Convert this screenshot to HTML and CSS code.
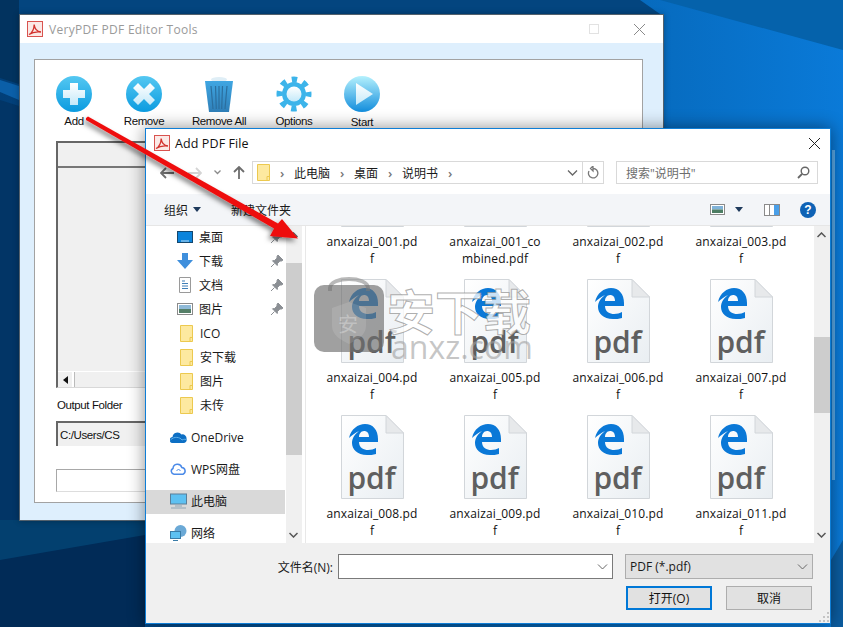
FILE: index.html
```html
<!DOCTYPE html>
<html>
<head>
<meta http-equiv="Content-Type" content="text/html; charset=UTF-8" />
<title>VeryPDF PDF Editor Tools</title>
<link rel="stylesheet" href="styles.css">
</head>

<body>

<svg class="defs" width="0" height="0">
	<defs>
		<linearGradient id="ball" x1="0" y1="0" x2="0" y2="1">
			<stop offset="0" stop-color="#55c8f2" />
			<stop offset="1" stop-color="#0a9be0" />
		</linearGradient>
		<linearGradient id="ball-start" x1="0" y1="0" x2="0" y2="1">
			<stop offset="0" stop-color="#b5f1fd" />
			<stop offset="1" stop-color="#128ddc" />
		</linearGradient>
		<linearGradient id="bin" x1="0" y1="0" x2="0" y2="1">
			<stop offset="0" stop-color="#3fa6e2" />
			<stop offset="1" stop-color="#2f7fb8" />
		</linearGradient>
		<linearGradient id="white-ish" x1="0" y1="0" x2="0" y2="1">
			<stop offset="0" stop-color="#ffffff" />
			<stop offset="1" stop-color="#c4e9f9" />
		</linearGradient>
		<linearGradient id="page" x1="0" y1="0" x2="1" y2="1">
			<stop offset="0" stop-color="#ffffff" />
			<stop offset="1" stop-color="#e9eef2" />
		</linearGradient>
		<symbol id="i-pdf" viewBox="0 0 16 16">
			<rect x="0.500" y="0.500" width="15" height="15" fill="#fbe9e6" stroke="#d9534f" />
			<path d="M2 13.500C5 12 7 8 7.200 3.500 7.600 8 10 10.500 14 11 10 10.500 5.500 11 2 13.500Z" fill="none" stroke="#d2322d" stroke-width="1.300" />
		</symbol>
		<symbol id="i-folder" viewBox="0 0 13 17">
			<path d="M0.500 0.500H12.500V16.500H0.500Z" fill="#fde9a0" stroke="#ecc94f" />
			<path d="M10 16V12.500H12.500" fill="none" stroke="#ecc94f" />
		</symbol>
		<symbol id="i-pin" viewBox="0 0 14 14">
			<path d="M8 1L13 6 11.500 7 9.800 7 7.500 9.500 7.200 11.500 2.500 6.800 4.500 6.500 7 4.200 7 2.500ZM4.500 9.500L1 13" fill="#8b8f94" stroke="#8b8f94" />
		</symbol>
		<symbol id="i-file" viewBox="0 0 63 84">
			<path d="M0.500 0.500H45L62.500 18V83.500H0.500Z" fill="url(#page)" stroke="#d2d6da" />
			<path d="M45 0.500V18H62.500Z" fill="#e7e9eb" stroke="#d2d6da" />
			<path transform="translate(8 9)" fill="#0a78d7" fill-rule="evenodd" d="M0 14C2 5 9 0 16 0 24 0 29 6 29 15V18H10C10 24 15 26 19 26 22 26 25 25 27 24V30C24 31 21 31 18 31 8 31 3 25 3 19 3 14 6 10 10 7 6 9 3 11 0 14ZM10 13H20C20 9 18 7 15 7 12 7 10 10 10 13Z" />
		</symbol>
	</defs>
</svg>

<div class="desktop">

	<svg class="wallpaper" viewBox="0 0 843 627">
		<defs>
			<linearGradient id="wall" x1="0" y1="0" x2="1" y2="0">
				<stop offset="0" stop-color="#023f78" />
				<stop offset="0.6" stop-color="#0460ac" />
				<stop offset="1" stop-color="#0a7ad8" />
			</linearGradient>
		</defs>
		<rect width="843" height="627" fill="url(#wall)" />
		<polygon points="0,0 660,0 843,50 843,0" fill="#0562ab" />
		<polygon points="0,0 640,0 660,14 0,14" fill="#03457f" />
		<polygon points="0,0 19,0 19,84 0,78" fill="#02335f" />
		<polygon points="0,80 19,86 19,100 0,92" fill="#0b5fa8" />
		<polygon points="0,100 19,106 19,520 0,560" fill="#023566" />
		<polygon points="0,520 145,520 145,627 0,627" fill="#03406f" />
		<polygon points="0,560 145,535 145,627 0,627" fill="#012b57" />
		<polygon points="831,560 843,540 843,627 831,627" fill="#0b5c9f" />
		<rect x="832" y="150" width="3" height="330" fill="#5aa9e6" />
	</svg>

	<section class="win app-win">
		<div class="app-title">
			<svg class="title-icon"><use href="#i-pdf" /></svg>
			<span class="app-title-text">VeryPDF PDF Editor Tools</span>
			<span class="app-max"></span>
			<svg class="app-close" viewBox="0 0 11 11"><path d="M0 0L11 11M11 0L0 11" stroke="#8a8a8a" fill="none" /></svg>
		</div>
		<div class="app-body">
			<div class="panel">
				<div class="tools">
					<div class="tool">
						<svg class="tool-icon" viewBox="0 0 36 36">
							<circle cx="18" cy="18" r="18" fill="url(#ball)" />
							<path d="M14 7H22V14H29V22H22V29H14V22H7V14H14Z" fill="url(#white-ish)" />
						</svg>
						<span>Add</span>
					</div>
					<div class="tool">
						<svg class="tool-icon" viewBox="0 0 36 36">
							<circle cx="18" cy="18" r="18" fill="url(#ball)" />
							<path d="M12 7L18 13 24 7 29 12 23 18 29 24 24 29 18 23 12 29 7 24 13 18 7 12Z" fill="url(#white-ish)" />
						</svg>
						<span>Remove</span>
					</div>
					<div class="tool">
						<svg class="tool-icon" viewBox="0 0 36 36">
							<ellipse cx="18" cy="3.500" rx="8" ry="2.500" fill="#dfeef6" />
							<path d="M4 5H32L28 36H8Z" fill="url(#bin)" />
							<path d="M10 10L12 33M14.500 10L15.300 33M18 10V33M21.500 10L20.700 33M26 10L24 33" stroke="#2b6f9f" stroke-width="1.200" />
						</svg>
						<span>Remove All</span>
					</div>
					<div class="tool">
						<svg class="tool-icon" viewBox="0 0 36 36">
							<circle cx="18" cy="18" r="14.500" fill="none" stroke="#3cb4ea" stroke-width="6" stroke-dasharray="5.400 5.990" stroke-dashoffset="2.700" />
							<circle cx="18" cy="18" r="12" fill="#3cb4ea" />
							<circle cx="18" cy="18" r="7.500" fill="url(#white-ish)" />
						</svg>
						<span>Options</span>
					</div>
					<div class="tool">
						<svg class="tool-icon" viewBox="0 0 36 36">
							<circle cx="18" cy="18" r="18" fill="url(#ball-start)" />
							<path d="M12 7L29 18 12 29Z" fill="url(#white-ish)" />
						</svg>
						<span class="tool-start">Start</span>
					</div>
				</div>
				<div class="grid-box">
					<div class="grid-head"></div>
					<div class="grid-rows"></div>
					<div class="grid-scroll">
						<span class="grid-scroll-btn"><i class="arrow-left"></i></span>
					</div>
				</div>
				<div class="folder-label">Output Folder</div>
				<div class="folder-box">C:/Users/CS</div>
				<div class="status-box"></div>
			</div>
		</div>
	</section>

	<section class="win dialog">
		<div class="dlg-title">
			<svg class="title-icon"><use href="#i-pdf" /></svg>
			<span class="dlg-title-text">Add PDF File</span>
			<svg class="dlg-close" viewBox="0 0 11 11"><path d="M0 0L11 11M11 0L0 11" stroke="#222" fill="none" /></svg>
		</div>

		<div class="dlg-address">
			<div class="nav-btns">
				<svg width="14" height="12" viewBox="0 0 14 12"><path d="M6 1L1 6 6 11M1 6H14" fill="none" stroke="#6d6d6d" stroke-width="1.800" /></svg>
				<svg class="nav-fwd" width="14" height="12" viewBox="0 0 14 12"><path d="M8 1L13 6 8 11M13 6H0" fill="none" stroke="#d4d4d4" stroke-width="1.800" /></svg>
				<svg class="nav-drop" width="7" height="5" viewBox="0 0 7 5"><path d="M0.500 0.500L3.500 3.500 6.500 0.500" fill="none" stroke="#8a8a8a" stroke-width="1.300" /></svg>
				<svg class="nav-up" width="12" height="13" viewBox="0 0 12 13"><path d="M1 6L6 1 11 6M6 1V13" fill="none" stroke="#6d6d6d" stroke-width="1.800" /></svg>
			</div>
			<div class="addr-box">
				<svg class="addr-folder"><use href="#i-folder" /></svg>
				<i class="crumb-sep">›</i><span>此电脑</span>
				<i class="crumb-sep">›</i><span>桌面</span>
				<i class="crumb-sep">›</i><span>说明书</span>
				<i class="crumb-sep">›</i>
				<svg class="addr-chev" width="11" height="6" viewBox="0 0 11 6"><path d="M1 0.500L5.500 5 10 0.500" fill="none" stroke="#666" stroke-width="1.300" /></svg>
				<span class="addr-refresh">
					<svg width="12" height="13" viewBox="0 0 12 13"><path d="M6 2.500A4.700 4.700 0 1 1 2 5M6 0V5L3.500 2.500Z" fill="none" stroke="#777" stroke-width="1.300" /></svg>
				</span>
			</div>
			<div class="search-box">
				<span>搜索"说明书"</span>
				<svg width="13" height="13" viewBox="0 0 13 13"><circle cx="8" cy="5" r="3.800" fill="none" stroke="#666" stroke-width="1.400" /><path d="M5 8L1 12" stroke="#666" stroke-width="1.800" /></svg>
			</div>
		</div>

		<div class="dlg-toolbar">
			<span class="tb-org">组织</span><i class="caret"></i>
			<span class="tb-new">新建文件夹</span>
			<svg class="tb-view" width="15" height="11" viewBox="0 0 15 11">
				<rect x="0.500" y="0.500" width="14" height="10" fill="#fff" stroke="#8a8a8a" />
				<rect x="2" y="2" width="11" height="3.500" fill="#7fb2d8" />
				<rect x="2" y="5.500" width="11" height="3.500" fill="#4c7d63" />
			</svg>
			<i class="caret caret-view"></i>
			<svg class="tb-pane" width="16" height="12" viewBox="0 0 16 12">
				<rect x="0.500" y="0.500" width="15" height="11" fill="#fff" stroke="#8a8a8a" />
				<rect x="10" y="1" width="5" height="10" fill="#4a9fe8" />
				<path d="M5.500 1V11" stroke="#8a8a8a" />
			</svg>
			<span class="tb-help">?</span>
		</div>

		<div class="dlg-main">
			<nav class="nav-pane">
				<div class="nav-list">
					<div class="nav-row">
						<svg class="nav-icon" viewBox="0 0 16 16"><rect x="0.500" y="2.500" width="15" height="11" fill="#0b84dc" stroke="#14476e" /><path d="M4 12H12" stroke="#bfe0f6" /></svg>
						<span>桌面</span><svg class="pin"><use href="#i-pin" /></svg>
					</div>
					<div class="nav-row">
						<svg class="nav-icon" viewBox="0 0 16 16"><path d="M5 0H11V7H16L8 16 0 7H5Z" fill="#3f8fdc" /></svg>
						<span>下载</span><svg class="pin"><use href="#i-pin" /></svg>
					</div>
					<div class="nav-row">
						<svg class="nav-icon" viewBox="0 0 16 16"><path d="M2.500 0.500H13.500V15.500H2.500Z" fill="#fff" stroke="#9a9a9a" /><path d="M5 4H8M5 6.500H11M5 9H11M5 11.500H11" stroke="#3f7fb8" /></svg>
						<span>文档</span><svg class="pin"><use href="#i-pin" /></svg>
					</div>
					<div class="nav-row">
						<svg class="nav-icon" viewBox="0 0 16 16"><rect x="0.500" y="2.500" width="15" height="11" fill="#fff" stroke="#8a8a8a" /><rect x="2" y="4" width="12" height="4" fill="#8fbad8" /><rect x="2" y="8" width="12" height="4" fill="#557f68" /></svg>
						<span>图片</span><svg class="pin"><use href="#i-pin" /></svg>
					</div>
					<div class="nav-row">
						<svg class="nav-folder"><use href="#i-folder" /></svg><span>ICO</span>
					</div>
					<div class="nav-row">
						<svg class="nav-folder"><use href="#i-folder" /></svg><span>安下载</span>
					</div>
					<div class="nav-row">
						<svg class="nav-folder"><use href="#i-folder" /></svg><span>图片</span>
					</div>
					<div class="nav-row">
						<svg class="nav-folder"><use href="#i-folder" /></svg><span>未传</span>
					</div>
					<div class="nav-row nav-root">
						<svg class="root-icon" viewBox="0 0 17 12"><path d="M3 12A3 3 0 0 1 2.500 6 5 5 0 0 1 11.500 3.500 4 4 0 0 1 16.500 8 3 3 0 0 1 14 12Z" fill="#0d6fc4" /><path d="M0.500 9C4 5 10 6 12 9 14 8 16 8 16.800 9" stroke="#5fb0ea" fill="none" /></svg>
						<span>OneDrive</span>
					</div>
					<div class="nav-row nav-root">
						<svg class="root-icon" viewBox="0 0 17 12"><path d="M4 11.200A3 3 0 0 1 3 5.500 4.500 4.500 0 0 1 11.800 4.500 3.500 3.500 0 0 1 13 11.200Z" fill="#fff" stroke="#4b8ae8" stroke-width="1.500" /><path d="M6.500 8L8.500 6 10.500 8" fill="none" stroke="#4b8ae8" /></svg>
						<span>WPS网盘</span>
					</div>
					<div class="nav-row nav-root nav-active">
						<svg class="root-icon" viewBox="0 0 17 15"><rect x="0.500" y="0.500" width="16" height="10" fill="#5ec1f2" stroke="#5a7f99" /><path d="M5 12.500H12M1 14.500H16" stroke="#8fa6b6" /></svg>
						<span>此电脑</span>
					</div>
					<div class="nav-row nav-root nav-last">
						<svg class="root-icon" viewBox="0 0 17 16"><circle cx="10.500" cy="6" r="6" fill="#6ba9d6" /><rect x="0.500" y="6.500" width="10" height="7" fill="#5ec1f2" stroke="#3a7ca8" /><path d="M3 15.500H8" stroke="#3a7ca8" /></svg>
						<span>网络</span>
					</div>
				</div>
			</nav>
			<div class="vscroll nav-scroll">
				<svg class="chev-up" width="9" height="6" viewBox="0 0 9 6"><path d="M0.500 5L4.500 1 8.500 5" fill="none" stroke="#555" stroke-width="1.500" /></svg>
				<div class="vthumb nav-thumb"></div>
				<svg class="chev-down" width="9" height="6" viewBox="0 0 9 6"><path d="M0.500 1L4.500 5 8.500 1" fill="none" stroke="#555" stroke-width="1.500" /></svg>
			</div>
			<div class="files">
				<div class="file-grid">
					<div class="file"><div class="thumb"><svg class="thumb-page"><use href="#i-file" /></svg></div><p>anxaizai_001.pd<br>f</p></div>
					<div class="file"><div class="thumb"><svg class="thumb-page"><use href="#i-file" /></svg></div><p>anxaizai_001_co<br>mbined.pdf</p></div>
					<div class="file"><div class="thumb"><svg class="thumb-page"><use href="#i-file" /></svg></div><p>anxaizai_002.pd<br>f</p></div>
					<div class="file"><div class="thumb"><svg class="thumb-page"><use href="#i-file" /></svg></div><p>anxaizai_003.pd<br>f</p></div>
					<div class="file"><div class="thumb"><svg class="thumb-page"><use href="#i-file" /></svg><span class="thumb-ext">pdf</span></div><p>anxaizai_004.pd<br>f</p></div>
					<div class="file"><div class="thumb"><svg class="thumb-page"><use href="#i-file" /></svg><span class="thumb-ext">pdf</span></div><p>anxaizai_005.pd<br>f</p></div>
					<div class="file"><div class="thumb"><svg class="thumb-page"><use href="#i-file" /></svg><span class="thumb-ext">pdf</span></div><p>anxaizai_006.pd<br>f</p></div>
					<div class="file"><div class="thumb"><svg class="thumb-page"><use href="#i-file" /></svg><span class="thumb-ext">pdf</span></div><p>anxaizai_007.pd<br>f</p></div>
					<div class="file"><div class="thumb"><svg class="thumb-page"><use href="#i-file" /></svg><span class="thumb-ext">pdf</span></div><p>anxaizai_008.pd<br>f</p></div>
					<div class="file"><div class="thumb"><svg class="thumb-page"><use href="#i-file" /></svg><span class="thumb-ext">pdf</span></div><p>anxaizai_009.pd<br>f</p></div>
					<div class="file"><div class="thumb"><svg class="thumb-page"><use href="#i-file" /></svg><span class="thumb-ext">pdf</span></div><p>anxaizai_010.pd<br>f</p></div>
					<div class="file"><div class="thumb"><svg class="thumb-page"><use href="#i-file" /></svg><span class="thumb-ext">pdf</span></div><p>anxaizai_011.pd<br>f</p></div>
				</div>
			</div>
			<div class="vscroll files-scroll">
				<svg class="chev-up" width="9" height="6" viewBox="0 0 9 6"><path d="M0.500 5L4.500 1 8.500 5" fill="none" stroke="#555" stroke-width="1.500" /></svg>
				<div class="vthumb files-thumb"></div>
				<svg class="chev-down" width="9" height="6" viewBox="0 0 9 6"><path d="M0.500 1L4.500 5 8.500 1" fill="none" stroke="#555" stroke-width="1.500" /></svg>
			</div>
		</div>

		<div class="dlg-foot">
			<label class="name-label">文件名(N):</label>
			<div class="name-input">
				<svg width="11" height="6" viewBox="0 0 11 6"><path d="M1 0.500L5.500 5 10 0.500" fill="none" stroke="#666" /></svg>
			</div>
			<div class="type-select">
				<span>PDF (*.pdf)</span>
				<svg width="11" height="6" viewBox="0 0 11 6"><path d="M1 0.500L5.500 5 10 0.500" fill="none" stroke="#666" /></svg>
			</div>
			<div class="foot-btns">
				<button class="btn btn-main">打开(O)</button>
				<button class="btn">取消</button>
			</div>
			<svg class="grip" width="10" height="10" viewBox="0 0 10 10"><path d="M8 0h2v2h-2zM4 4h2v2h-2zM8 4h2v2h-2zM0 8h2v2h-2zM4 8h2v2h-2zM8 8h2v2h-2z" fill="#c4c4c4" /></svg>
		</div>
	</section>

	<!-- site watermark over the dialog -->
	<div class="watermark">
		<svg class="mark-lock" viewBox="0 0 72 82">
			<path d="M17 20V17C17 5 55 5 55 17V20" fill="none" stroke="#8a8a8a" stroke-opacity="0.600" stroke-width="4" />
			<rect x="1" y="14" width="70" height="67" rx="10" fill="#6f6f6f" fill-opacity="0.660" />
			<path d="M36 31L53 37V55C53 65 42 70 36 73 30 70 19 65 19 55V37Z" fill="#fff" fill-opacity="0.120" />
		</svg>
		<span class="mark-shield">安</span>
		<span class="mark-cn">安下载</span>
		<span class="mark-en">anxz.com</span>
	</div>

	<svg class="red-arrow" viewBox="0 0 843 627">
		<defs>
			<filter id="arrow-shadow" x="-10%" y="-10%" width="120%" height="130%">
				<feDropShadow dx="-2" dy="3" stdDeviation="2.500" flood-color="#000" flood-opacity="0.500" />
			</filter>
		</defs>
		<path d="M86 118L88 116.500 278 223.500 282 219 298 238.500 270 236 274 228.500 86 120Z" fill="#ee1111" filter="url(#arrow-shadow)" />
	</svg>

</div>

</body>
</html>
```

FILE: styles.css
```css
* {
	box-sizing: border-box;
}

body {
	margin: 0;
	font-family: "Open Sans", "Noto Sans CJK SC", sans-serif;
	font-size: 12px;
	color: #1a1a1a;
	overflow: hidden;
}

p {
	margin: 0;
}

.defs {
	position: absolute;
}

.desktop {
	position: relative;
	width: 843px;
	height: 627px;
	overflow: hidden;
}

.wallpaper {
	position: absolute;
	left: 0;
	top: 0;
	width: 843px;
	height: 627px;
}

.win {
	position: absolute;
	display: flex;
	flex-direction: column;
}

/* back window */

.app-win {
	left: 19px;
	top: 14px;
	width: 645px;
	height: 507px;
	border: 1px solid #54616c;
	background: #deeffd;
	box-shadow: 0 0 6px rgba(0, 0, 0, 0.3);
}

.app-title {
	display: flex;
	align-items: center;
	height: 29px;
	padding-left: 7px;
	background: #fff;
}

.title-icon {
	width: 16px;
	height: 16px;
	flex: none;
}

.app-title-text {
	margin-left: 6px;
	color: #9a9a9a;
	font-size: 12px;
	letter-spacing: 0.3px;
}

.app-max {
	width: 10px;
	height: 10px;
	margin-left: auto;
	border: 1px solid #e2e2e2;
}

.app-close {
	width: 11px;
	height: 11px;
	margin: 0 18px 0 35px;
}

.app-body {
	flex: 1;
	padding: 16px 20px 17px 14px;
}

.panel {
	height: 444px;
	border: 1px solid #a2a2a2;
	background: #fff;
	font-family: "Liberation Sans", sans-serif;
	font-size: 11.5px;
	letter-spacing: -0.4px;
	color: #111;
}

.tools {
	display: grid;
	grid-template-columns: 70px 70px 80px 70px 66px;
	height: 81px;
	padding: 16px 0 0 4px;
}

.tool {
	display: flex;
	flex-direction: column;
	align-items: center;
	gap: 3px;
}

.tool-icon {
	width: 36px;
	height: 36px;
}

.tool-start {
	margin-top: 1px;
}

.grid-box {
	display: flex;
	flex-direction: column;
	width: 560px;
	height: 247px;
	margin-left: 21px;
	border-left: 2px solid #666;
	border-top: 2px solid #666;
	border-bottom: 1px solid #d8d8d8;
	background: #f0f0f0;
}

.grid-head {
	height: 25px;
	border-bottom: 2px solid #777;
}

.grid-rows {
	flex: 1;
}

.grid-scroll {
	display: flex;
	height: 16px;
	border-top: 1px solid #fff;
}

.grid-scroll-btn {
	display: flex;
	align-items: center;
	justify-content: center;
	width: 16px;
	border-right: 2px solid #fff;
	box-shadow: 1px 0 0 #bbb;
}

.arrow-left {
	border-top: 4px solid transparent;
	border-bottom: 4px solid transparent;
	border-right: 5px solid #111;
}

.folder-label {
	display: flex;
	align-items: center;
	height: 33px;
	padding-left: 1px;
	margin-left: 21px;
}

.folder-box {
	display: flex;
	align-items: center;
	width: 560px;
	height: 25px;
	margin-left: 21px;
	padding-left: 2px;
	border-left: 2px solid #666;
	border-top: 2px solid #666;
	background: #f0f0f0;
}

.status-box {
	width: 560px;
	height: 23px;
	margin: 23px 0 0 21px;
	border: 1px solid #a8a8a8;
	border-bottom-color: #ddd;
}

/* file dialog */

.dialog {
	left: 145px;
	top: 128px;
	width: 686px;
	height: 496px;
	border: 1px solid #0f7ed6;
	background: #fff;
	box-shadow: 0 0 16px rgba(0, 0, 0, 0.45);
}

.dlg-title {
	display: flex;
	align-items: center;
	height: 28px;
	padding-left: 8px;
}

.dlg-title-text {
	margin-left: 5px;
	font-size: 12.500px;
	letter-spacing: 0.1px;
	color: #111;
}

.dlg-close {
	width: 11px;
	height: 11px;
	margin: 0 10px 0 auto;
}

.dlg-address {
	display: flex;
	align-items: center;
	height: 37px;
	padding: 0 12px 6px 14px;
}

.nav-btns {
	display: flex;
	align-items: center;
	width: 92px;
}

.nav-fwd {
	margin-left: 14px;
}

.nav-drop {
	margin-left: 12px;
}

.nav-up {
	margin-left: 12px;
}

.addr-box {
	display: flex;
	align-items: center;
	width: 352px;
	height: 23px;
	padding-left: 4px;
	border: 1px solid #d9d9d9;
}

.addr-folder {
	width: 13px;
	height: 17px;
	margin-right: 7px;
}

.crumb-sep {
	width: 17px;
	padding-left: 3px;
	color: #777;
	font-style: normal;
	font-size: 13px;
	font-weight: 600;
}

.addr-box span {
	margin-right: 7px;
}

.addr-chev {
	margin-left: auto;
	margin-right: 4px;
}

.addr-box .addr-refresh {
	display: flex;
	align-items: center;
	justify-content: center;
	width: 21px;
	height: 21px;
	margin: 0;
	border-left: 1px solid #d9d9d9;
}

.search-box {
	display: flex;
	align-items: center;
	justify-content: space-between;
	width: 202px;
	height: 23px;
	margin-left: 12px;
	padding: 0 7px 0 9px;
	border: 1px solid #d9d9d9;
	color: #6d6d6d;
}

.dlg-toolbar {
	display: flex;
	align-items: center;
	height: 32px;
	padding-left: 18px;
	background: #f3f5f8;
	border-bottom: 1px solid #e6e6e6;
}

.caret {
	width: 0;
	height: 0;
	margin-left: 5px;
	border-left: 4.500px solid transparent;
	border-right: 4.500px solid transparent;
	border-top: 5px solid #1f3a5c;
}

.tb-new {
	margin-left: 30px;
}

.tb-view {
	margin-left: auto;
}

.caret-view {
	margin-left: 10px;
}

.tb-pane {
	margin-left: 21px;
}

.tb-help {
	display: flex;
	align-items: center;
	justify-content: center;
	width: 16px;
	height: 16px;
	margin: 0 14px 0 20px;
	border-radius: 50%;
	background: #0e62b5;
	color: #fff;
	font-family: "Liberation Sans", sans-serif;
	font-size: 12px;
	font-weight: bold;
}

.dlg-main {
	display: flex;
	height: 317px;
	overflow: hidden;
}

.nav-pane {
	width: 140px;
	flex: none;
	overflow: hidden;
}

.nav-list {
	margin-top: -1px;
}

.nav-row {
	display: flex;
	align-items: center;
	height: 24px;
	padding-left: 31px;
}

.nav-icon {
	width: 16px;
	height: 16px;
	margin-right: 6px;
}

.nav-folder {
	width: 13px;
	height: 17px;
	margin: 0 7px 0 3px;
}

.pin {
	width: 14px;
	height: 14px;
	margin-left: auto;
	margin-right: 2px;
}

.nav-root {
	margin-top: 8px;
	padding-left: 24px;
}

.root-icon {
	width: 17px;
	height: 16px;
	margin-right: 4px;
}

.nav-active {
	width: 139px;
	margin-top: 9px;
	padding-bottom: 2px;
	background: #d9d9d9;
}

.nav-last {
	margin-top: 7px;
}

.vscroll {
	position: relative;
	width: 16px;
	flex: none;
	background: #f0f0f0;
}

.chev-up {
	position: absolute;
	left: 3px;
	top: 6px;
}

.chev-down {
	position: absolute;
	left: 3px;
	bottom: 5px;
}

.vthumb {
	background: #cdcdcd;
}

.nav-thumb {
	height: 192px;
	margin-top: 37px;
}

.files-thumb {
	height: 76px;
	margin-top: 111px;
}

.files {
	flex: 1;
	overflow: hidden;
	margin-left: 3px;
	padding-left: 5px;
	border-left: 1px solid #e8e8e8;
}

.file-grid {
	display: grid;
	grid-template-columns: repeat(4, 123px);
	grid-auto-rows: 136px;
	margin-top: -83px;
}

.file {
	display: flex;
	flex-direction: column;
	align-items: center;
}

.thumb {
	position: relative;
	display: flex;
	justify-content: center;
	width: 63px;
	height: 84px;
	padding-top: 43px;
	padding-right: 2px;
}

.thumb-page {
	position: absolute;
	left: 0;
	top: 0;
	width: 63px;
	height: 84px;
}

.thumb-ext {
	position: relative;
	color: #5f5f5f;
	font-size: 30px;
	font-weight: 600;
	line-height: 40px;
}

.file p {
	margin-top: 7px;
	padding-right: 1px;
	letter-spacing: 0.13px;
	line-height: 16.500px;
	text-align: center;
	color: #111;
}

.dlg-foot {
	position: relative;
	flex: 1;
	display: grid;
	grid-template-columns: 180px 275px 188px;
	grid-template-rows: 25px 24px;
	column-gap: 12px;
	row-gap: 7px;
	align-content: start;
	padding-top: 11px;
	background: #f0f0f0;
}

.name-label {
	align-self: center;
	text-align: right;
	margin-right: -7px;
}

.name-input {
	display: flex;
	align-items: center;
	justify-content: flex-end;
	padding-right: 4px;
	border: 1px solid #7a7a7a;
	background: #fff;
}

.type-select {
	display: flex;
	align-items: center;
	justify-content: space-between;
	padding: 0 4px;
	border: 1px solid #adadad;
	background: #e1e1e1;
}

.foot-btns {
	grid-column: 3;
	display: flex;
	gap: 14px;
	margin-left: 1px;
}

.btn {
	width: 86px;
	height: 24px;
	padding: 0;
	border: 1px solid #adadad;
	background: #e1e1e1;
	font-family: inherit;
	font-size: 12px;
	color: #111;
}

.btn-main {
	border: 2px solid #0078d7;
}

.grip {
	position: absolute;
	right: 1px;
	bottom: 1px;
}

/* overlays */

.watermark {
	position: absolute;
	left: 313px;
	top: 271px;
	width: 230px;
	height: 110px;
	pointer-events: none;
}

.mark-lock {
	position: absolute;
	left: 0;
	top: 0;
	width: 72px;
	height: 82px;
}

.mark-shield {
	position: absolute;
	left: 25px;
	top: 38px;
	color: rgba(255, 255, 255, 0.3);
	font-family: "Noto Sans CJK SC", sans-serif;
	font-size: 20px;
}

.mark-cn {
	position: absolute;
	left: 74px;
	top: 3px;
	color: rgba(255, 255, 255, 0.8);
	font-family: "Noto Sans CJK SC", sans-serif;
	font-size: 48px;
	font-weight: 700;
	line-height: 70px;
	-webkit-text-stroke: 1px rgba(140, 140, 140, 0.7);
}

.mark-en {
	position: absolute;
	left: 78px;
	top: 57px;
	color: rgba(160, 160, 160, 0.6);
	font-family: "Open Sans", sans-serif;
	font-size: 32px;
	line-height: 38px;
}

.red-arrow {
	position: absolute;
	left: 0;
	top: 0;
	width: 843px;
	height: 627px;
	pointer-events: none;
}
```
